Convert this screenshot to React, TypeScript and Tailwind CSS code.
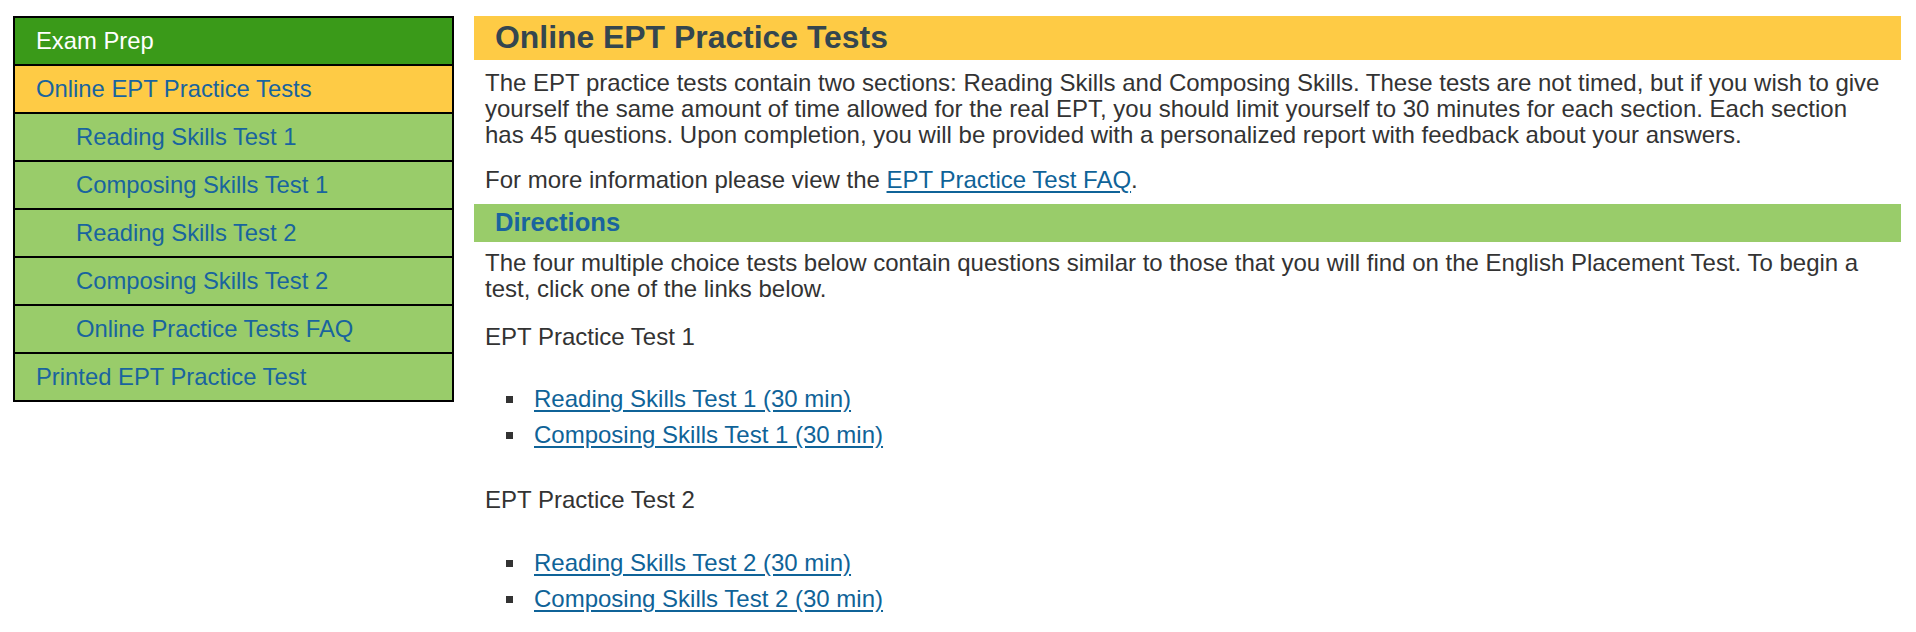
import React from "react";

const navItems: { label: string; level: number; kind: "head" | "active" | "item" }[] = [
  { label: "Exam Prep", level: 0, kind: "head" },
  { label: "Online EPT Practice Tests", level: 0, kind: "active" },
  { label: "Reading Skills Test 1", level: 1, kind: "item" },
  { label: "Composing Skills Test 1", level: 1, kind: "item" },
  { label: "Reading Skills Test 2", level: 1, kind: "item" },
  { label: "Composing Skills Test 2", level: 1, kind: "item" },
  { label: "Online Practice Tests FAQ", level: 1, kind: "item" },
  { label: "Printed EPT Practice Test", level: 0, kind: "item" },
];

function Bullet({ children }: { children: React.ReactNode }) {
  return (
    <li className="flex items-center h-[36px]">
      <span className="ml-[21px] w-[7px] h-[7px] bg-[#333333] shrink-0" />
      <a href="#" className="ml-[21px] text-[#0f6398] underline underline-offset-[3px]">
        {children}
      </a>
    </li>
  );
}

export default function App() {
  return (
    <div className="flex items-start bg-white min-h-[632px] pl-[13px] pr-[15px] pt-[16px] font-['Liberation_Sans',Arial,Helvetica,sans-serif]">
      <nav className="w-[441px] shrink-0 border-2 border-black">
        {navItems.map((it, i) => {
          const bg =
            it.kind === "head" ? "bg-[#3a9a19]" : it.kind === "active" ? "bg-[#fecb45]" : "bg-[#99cc6a]";
          const color = it.kind === "head" ? "text-white" : "text-[#19649e]";
          const pad = it.level === 1 ? "pl-[61px]" : "pl-[21px]";
          return (
            <div
              key={i}
              className={`${bg} ${color} ${pad} ${i > 0 ? "border-t-2 border-black" : ""} h-[46px] box-content flex items-center text-[23.8px]`}
            >
              {it.label}
            </div>
          );
        })}
      </nav>

      <main className="ml-[20px] flex-1 text-[#333333] text-[24px]">
        <div className="h-[44px] bg-[#fecb45] flex items-center pl-[21px]">
          <h1 className="font-bold text-[31.9px] text-[#34464f] leading-none">Online EPT Practice Tests</h1>
        </div>
        <p className="mt-[10px] pl-[11px] leading-[26px] whitespace-nowrap">
          The EPT practice tests contain two sections: Reading Skills and Composing Skills. These tests are not
          timed, but if you wish to give
          <br />
          yourself the same amount of time allowed for the real EPT, you should limit yourself to 30 minutes for
          each section. Each section
          <br />
          has 45 questions. Upon completion, you will be provided with a personalized report with feedback about
          your answers.
        </p>
        <p className="mt-[19px] px-[11px] leading-[26px]">
          For more information please view the{" "}
          <a href="#" className="text-[#0f6398] underline underline-offset-[3px]">
            EPT Practice Test FAQ
          </a>
          .
        </p>
        <div className="mt-[11px] h-[38px] bg-[#99cc6a] flex items-center pl-[21px]">
          <h2 className="font-bold text-[25.6px] text-[#19649e] leading-none">Directions</h2>
        </div>
        <p className="mt-[8px] pl-[11px] pr-[4px] leading-[26px]">
          The four multiple choice tests below contain questions similar to those that you will find on the English
          Placement Test. To begin a test, click one of the links below.
        </p>
        <p className="mt-[22px] px-[11px] leading-[26px]">EPT Practice Test 1</p>
        <ul className="mt-[31px] px-[11px]">
          <Bullet>Reading Skills Test 1 (30 min)</Bullet>
          <Bullet>Composing Skills Test 1 (30 min)</Bullet>
        </ul>
        <p className="mt-[34px] px-[11px] leading-[26px]">EPT Practice Test 2</p>
        <ul className="mt-[32px] px-[11px]">
          <Bullet>Reading Skills Test 2 (30 min)</Bullet>
          <Bullet>Composing Skills Test 2 (30 min)</Bullet>
        </ul>
      </main>
    </div>
  );
}
